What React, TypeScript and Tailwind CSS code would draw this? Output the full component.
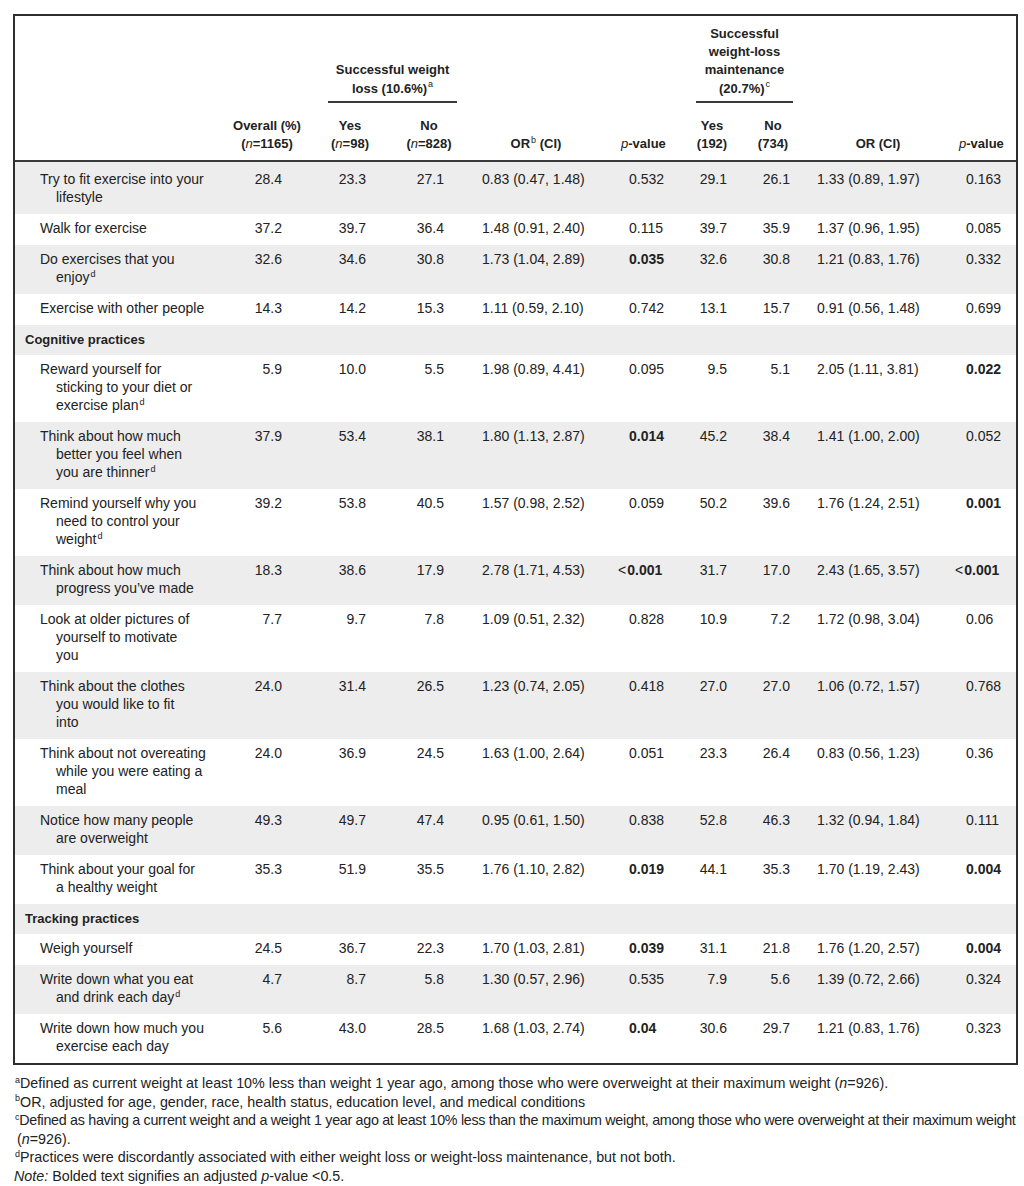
import React from 'react';

type DataRow = { kind: 'data'; label: React.ReactNode[]; v: string[]; b?: number[] };
type SectionRow = { kind: 'section'; label: string };
type Row = DataRow | SectionRow;

const Sup = ({ c }: { c: string }) => (
  <sup className="text-[9px] font-normal align-baseline relative top-[-0.6em] ml-[1px]">{c}</sup>
);

const rows: Row[] = [
  { kind: 'data', label: ['Try to fit exercise into your', 'lifestyle'], v: ['28.4', '23.3', '27.1', '0.83 (0.47, 1.48)', '0.532', '29.1', '26.1', '1.33 (0.89, 1.97)', '0.163'] },
  { kind: 'data', label: ['Walk for exercise'], v: ['37.2', '39.7', '36.4', '1.48 (0.91, 2.40)', '0.115', '39.7', '35.9', '1.37 (0.96, 1.95)', '0.085'] },
  { kind: 'data', label: ['Do exercises that you', <>enjoy<Sup c="d" /></>], v: ['32.6', '34.6', '30.8', '1.73 (1.04, 2.89)', '0.035', '32.6', '30.8', '1.21 (0.83, 1.76)', '0.332'], b: [4] },
  { kind: 'data', label: ['Exercise with other people'], v: ['14.3', '14.2', '15.3', '1.11 (0.59, 2.10)', '0.742', '13.1', '15.7', '0.91 (0.56, 1.48)', '0.699'] },
  { kind: 'section', label: 'Cognitive practices' },
  { kind: 'data', label: ['Reward yourself for', 'sticking to your diet or', <>exercise plan<Sup c="d" /></>], v: ['5.9', '10.0', '5.5', '1.98 (0.89, 4.41)', '0.095', '9.5', '5.1', '2.05 (1.11, 3.81)', '0.022'], b: [8] },
  { kind: 'data', label: ['Think about how much', 'better you feel when', <>you are thinner<Sup c="d" /></>], v: ['37.9', '53.4', '38.1', '1.80 (1.13, 2.87)', '0.014', '45.2', '38.4', '1.41 (1.00, 2.00)', '0.052'], b: [4] },
  { kind: 'data', label: ['Remind yourself why you', 'need to control your', <>weight<Sup c="d" /></>], v: ['39.2', '53.8', '40.5', '1.57 (0.98, 2.52)', '0.059', '50.2', '39.6', '1.76 (1.24, 2.51)', '0.001'], b: [8] },
  { kind: 'data', label: ['Think about how much', 'progress you\u2019ve made'], v: ['18.3', '38.6', '17.9', '2.78 (1.71, 4.53)', '<0.001', '31.7', '17.0', '2.43 (1.65, 3.57)', '<0.001'], b: [4, 8] },
  { kind: 'data', label: ['Look at older pictures of', 'yourself to motivate', 'you'], v: ['7.7', '9.7', '7.8', '1.09 (0.51, 2.32)', '0.828', '10.9', '7.2', '1.72 (0.98, 3.04)', '0.06'] },
  { kind: 'data', label: ['Think about the clothes', 'you would like to fit', 'into'], v: ['24.0', '31.4', '26.5', '1.23 (0.74, 2.05)', '0.418', '27.0', '27.0', '1.06 (0.72, 1.57)', '0.768'] },
  { kind: 'data', label: ['Think about not overeating', 'while you were eating a', 'meal'], v: ['24.0', '36.9', '24.5', '1.63 (1.00, 2.64)', '0.051', '23.3', '26.4', '0.83 (0.56, 1.23)', '0.36'] },
  { kind: 'data', label: ['Notice how many people', 'are overweight'], v: ['49.3', '49.7', '47.4', '0.95 (0.61, 1.50)', '0.838', '52.8', '46.3', '1.32 (0.94, 1.84)', '0.111'] },
  { kind: 'data', label: ['Think about your goal for', 'a healthy weight'], v: ['35.3', '51.9', '35.5', '1.76 (1.10, 2.82)', '0.019', '44.1', '35.3', '1.70 (1.19, 2.43)', '0.004'], b: [4, 8] },
  { kind: 'section', label: 'Tracking practices' },
  { kind: 'data', label: ['Weigh yourself'], v: ['24.5', '36.7', '22.3', '1.70 (1.03, 2.81)', '0.039', '31.1', '21.8', '1.76 (1.20, 2.57)', '0.004'], b: [4, 8] },
  { kind: 'data', label: ['Write down what you eat', <>and drink each day<Sup c="d" /></>], v: ['4.7', '8.7', '5.8', '1.30 (0.57, 2.96)', '0.535', '7.9', '5.6', '1.39 (0.72, 2.66)', '0.324'] },
  { kind: 'data', label: ['Write down how much you', 'exercise each day'], v: ['5.6', '43.0', '28.5', '1.68 (1.03, 2.74)', '0.04', '30.6', '29.7', '1.21 (0.83, 1.76)', '0.323'], b: [4] },
];

const valCls = [
  'text-right pr-[25px]',
  'text-right pr-[27px]',
  'text-right pr-[21px]',
  'text-left pl-[17px]',
  'text-left pl-[22px]',
  'text-right pr-[22px]',
  'text-right pr-[7px]',
  'text-left pl-[20px]',
  'text-left pl-[7px]',
];

function Val({ t, bold }: { t: string; bold: boolean }) {
  if (t.startsWith('<')) {
    return (
      <>
        <span className="ml-[-11px] mr-[1px] font-normal">&lt;</span>
        <span className={bold ? 'font-bold' : ''}>{t.slice(1)}</span>
      </>
    );
  }
  return <span className={bold ? 'font-bold' : ''}>{t}</span>;
}

const N = () => <span className="italic font-normal">n</span>;

export default function App() {
  const thBase = 'align-bottom font-bold text-[13px] leading-[18px] border-b-2 border-[#3a3a3a] pb-[7px]';
  return (
    <div className="bg-white text-[#222] font-['Liberation_Sans',Arial,sans-serif] text-[14px] leading-[18px] w-[1024px] h-[1186px] overflow-hidden">
      <div className="ml-[13px] mt-[14px] w-[1005px] border-2 border-[#2e2e2e]">
        <table className="table-fixed w-[1001px] border-collapse">
          <colgroup>
            <col className="w-[212px]" />
            <col className="w-[80px]" />
            <col className="w-[86px]" />
            <col className="w-[72px]" />
            <col className="w-[142px]" />
            <col className="w-[68px]" />
            <col className="w-[74px]" />
            <col className="w-[48px]" />
            <col className="w-[162px]" />
            <col className="w-[57px]" />
          </colgroup>
          <thead>
            <tr>
              <th rowSpan={2} className={thBase}></th>
              <th rowSpan={2} className={thBase + ' text-center'}>
                Overall (%)
                <br />
                (<N />=1165)
              </th>
              <th colSpan={2} className="align-bottom h-[87px] font-bold text-[13px] leading-[18.3px] text-center p-0">
                <div className="ml-[21px] mr-[8px] border-b-2 border-[#3a3a3a] pb-[3px]">
                  Successful weight
                  <br />
                  loss (10.6%)<Sup c="a" />
                </div>
              </th>
              <th rowSpan={2} className={thBase + ' text-center'}>
                OR<Sup c="b" /> (CI)
              </th>
              <th rowSpan={2} className={thBase + ' text-left pl-[14px]'}>
                <span className="italic font-normal">p</span>-value
              </th>
              <th colSpan={2} className="align-bottom h-[87px] font-bold text-[13px] leading-[18.3px] text-center p-0">
                <div className="ml-[21px] mr-[4px] border-b-2 border-[#3a3a3a] pb-[3px]">
                  Successful
                  <br />
                  weight-loss
                  <br />
                  maintenance
                  <br />
                  (20.7%)<Sup c="c" />
                </div>
              </th>
              <th rowSpan={2} className={thBase + ' text-center'}>
                OR (CI)
              </th>
              <th rowSpan={2} className={thBase + ' text-left pl-0'}>
                <span className="italic font-normal">p</span>-value
              </th>
            </tr>
            <tr>
              <th className={thBase + ' text-center h-[58px]'}>
                Yes
                <br />
                (<N />=98)
              </th>
              <th className={thBase + ' text-center'}>
                No
                <br />
                (<N />=828)
              </th>
              <th className={thBase + ' text-center'}>
                Yes
                <br />
                (192)
              </th>
              <th className={thBase + ' text-center'}>
                No
                <br />
                (734)
              </th>
            </tr>
          </thead>
          <tbody>
            {rows.map((r, i) => {
              const bg = i % 2 === 0 ? 'bg-[#ededed]' : 'bg-white';
              if (r.kind === 'section') {
                return (
                  <tr key={i} className={bg}>
                    <td colSpan={10} className="pl-[10px] pt-[6px] pb-[6px] font-bold text-[13px] leading-[18px] whitespace-nowrap">
                      {r.label}
                    </td>
                  </tr>
                );
              }
              const pt = i === 0 ? 'pt-[8px]' : 'pt-[5px]';
              return (
                <tr key={i} className={bg}>
                  <td className={'align-top pb-[8px] pl-[25px] whitespace-nowrap ' + pt}>
                    <div className="indent-[-16px] pl-[16px]">
                      {r.label.map((l, j) => (
                        <React.Fragment key={j}>
                          {j > 0 && <br />}
                          {l}
                        </React.Fragment>
                      ))}
                    </div>
                  </td>
                  {r.v.map((t, j) => (
                    <td key={j} className={'align-top pb-[8px] whitespace-nowrap ' + pt + ' ' + valCls[j]}>
                      <Val t={t} bold={!!r.b && r.b.includes(j)} />
                    </td>
                  ))}
                </tr>
              );
            })}
          </tbody>
        </table>
      </div>
      <div className="ml-[14px] mt-[9px] text-[14.3px] leading-[18.5px] whitespace-nowrap">
        <div>
          <Sup c="a" />
          Defined as current weight at least 10% less than weight 1 year ago, among those who were overweight at their maximum weight (<N />=926).
        </div>
        <div>
          <Sup c="b" />
          OR, adjusted for age, gender, race, health status, education level, and medical conditions
        </div>
        <div className="tracking-[-0.3px]">
          <Sup c="c" />
          Defined as having a current weight and a weight 1 year ago at least 10% less than the maximum weight, among those who were overweight at their maximum weight
        </div>
        <div className="pl-[3px]">
          (<N />=926).
        </div>
        <div>
          <Sup c="d" />
          Practices were discordantly associated with either weight loss or weight-loss maintenance, but not both.
        </div>
        <div>
          <span className="italic">Note:</span> Bolded text signifies an adjusted <span className="italic">p</span>-value &lt;0.5.
        </div>
      </div>
    </div>
  );
}
